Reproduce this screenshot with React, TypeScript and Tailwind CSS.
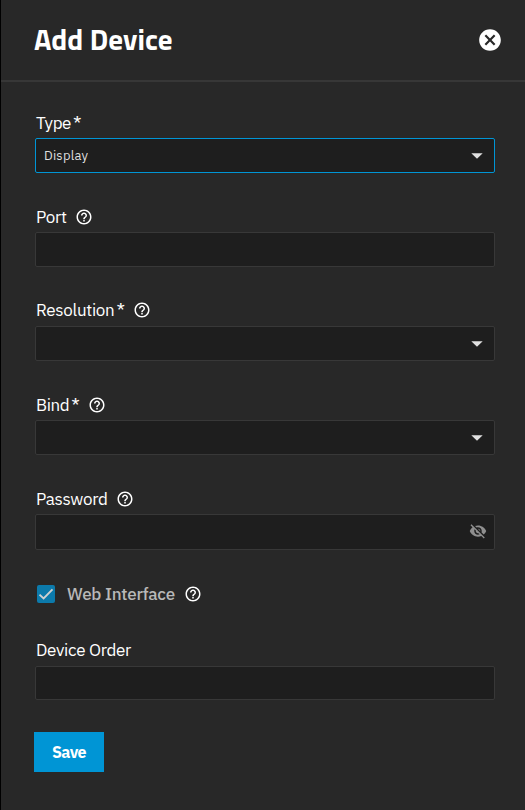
import type { ReactNode } from "react";
import { MdCancel, MdHelpOutline, MdVisibilityOff } from "react-icons/md";

function Label({ text, track, required, help, className = "h-[30px]" }: {
  text: string; track: string; required?: boolean; help?: boolean; className?: string;
}) {
  return (
    <div className={`flex items-center pl-px text-[17px] leading-[20px] text-white ${className}`}>
      <span className={`whitespace-nowrap ${track}`}>{text}</span>
      {required && <span className="ml-[2px] w-[9px] text-[19px] leading-[20px]">*</span>}
      {help && <MdHelpOutline className="ml-2 size-[18px] shrink-0" />}
    </div>
  );
}

function Box({ className = "h-[35px] border-[#383838]", children }: { className?: string; children?: ReactNode }) {
  return (
    <div className={`flex w-[460px] items-center justify-between rounded-[2px] border bg-[#1e1e1e] pl-2 ${className}`}>
      {children}
    </div>
  );
}

function Caret() {
  return (
    <svg className="ml-auto mr-[11px] h-[6px] w-[12px]" viewBox="0 0 12 6">
      <path d="M0.3 0.3h11.4L6 5.8z" fill="#e0e0e0" />
    </svg>
  );
}

export default function App() {
  return (
    <div className="flex h-[810px] w-[525px] flex-col border-l border-black bg-[#282828] font-['IBM_Plex_Sans',Roboto,sans-serif]">
      <header className="flex h-[82px] shrink-0 items-center justify-between border-b-2 border-[#373737] pl-[33px] pr-[22px]">
        <h1 className="mb-[2px] whitespace-nowrap font-['Titillium_Web',Roboto,sans-serif] text-[29px] font-bold leading-none tracking-[0.05px] text-white">
          Add Device
        </h1>
        <MdCancel className="size-[26px] text-white" />
      </header>
      <form className="flex flex-col items-start pl-[34px] pt-[26px]">
        <Label text="Type" track="tracking-[-0.45px]" required />
        <Box className="h-[35px] border-[#0095d5]">
          <span className="text-[13px] tracking-[0.2px] text-[#dedede]">Display</span>
          <Caret />
        </Box>
        <Label text="Port" track="tracking-[-0.25px]" help className="mt-[29px] h-[30px]" />
        <Box />
        <Label text="Resolution" track="tracking-[-0.3px]" required help className="mt-[28px] mb-px h-[30px]" />
        <Box><Caret /></Box>
        <Label text="Bind" track="tracking-[-0.4px]" required help className="mt-[29px] h-[30px]" />
        <Box><Caret /></Box>
        <Label text="Password" track="tracking-[-0.3px]" help className="mt-[29px] h-[30px]" />
        <Box className="h-[36px] border-[#383838]">
          <MdVisibilityOff className="mb-[2px] ml-auto mr-[7px] size-[18px] text-[#8f8f8f]" />
        </Box>
        <div className="mt-[34px] flex h-5 items-center pl-[2px]">
          <span className="flex size-[18px] items-center justify-center rounded-[2px] bg-[#0c7aab]">
            <svg className="size-[18px]" viewBox="0 0 18 18">
              <path d="M2.5 9.6 6.6 13.4 15.5 4.4" fill="none" stroke="#d0d0d0" strokeWidth="1.9" />
            </svg>
          </span>
          <span className="ml-3 whitespace-nowrap text-[17px] font-medium leading-[20px] tracking-[-0.25px] text-[#b8b8b8]">Web Interface</span>
          <MdHelpOutline className="ml-[9px] size-[18px] text-white" />
        </div>
        <Label text="Device Order" track="tracking-[-0.3px]" className="mt-[31px] mb-px h-[30px]" />
        <Box className="h-[34px] border-[#383838]" />
        <button type="button" className="-ml-px mt-8 h-10 w-[70px] bg-[#0095d5] text-[16px] font-bold tracking-[-0.6px] text-white">
          Save
        </button>
      </form>
    </div>
  );
}
